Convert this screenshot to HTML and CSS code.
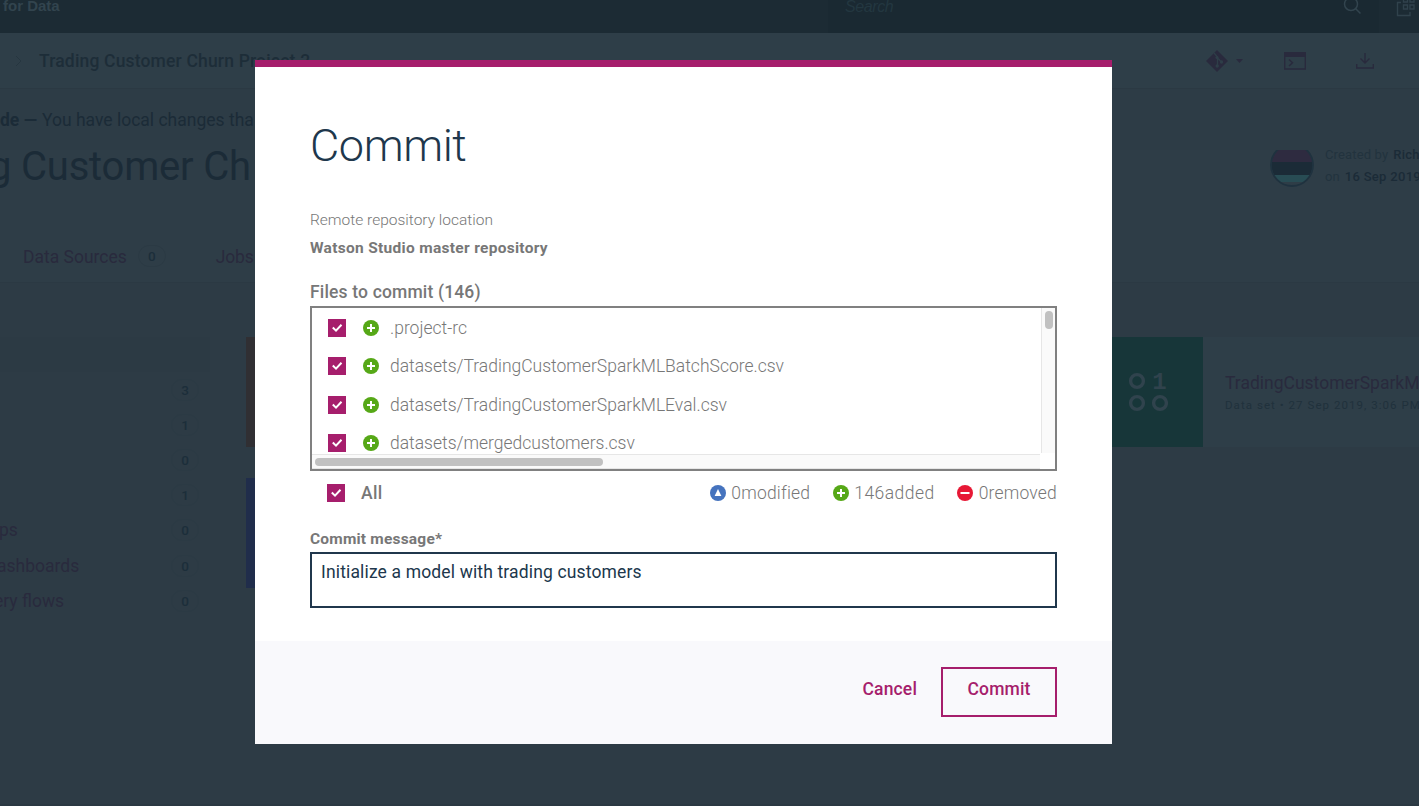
FILE: index.html
```html
<!DOCTYPE html>
<html lang="en">
<head>
<meta charset="utf-8">
<title>Commit</title>
<link rel="stylesheet" href="styles.css">
</head>
<body>
<svg class="defs" width="0" height="0">
  <symbol id="check" viewBox="0 0 18 18"><rect width="18" height="18" fill="#a61e6c"/><path d="M4.800 8.500l3.200 3.100 5.500-5.900" fill="none" stroke="#fff" stroke-width="2"/></symbol>
  <symbol id="add" viewBox="0 0 16 16"><circle cx="8" cy="8" r="8" fill="#56a817"/><path d="M8 4v8M4 8h8" stroke="#fff" stroke-width="2"/></symbol>
</svg>
<div class="page">
  <header class="topbar">
    <div class="brand"><span>for Data</span></div>
    <div class="search"><span>Search</span>
      <svg width="20" height="20" viewBox="0 0 20 20"><circle cx="9" cy="9" r="6.500"/><path d="M13.500 13.500l5 5"/></svg>
    </div>
    <svg class="apps" width="20" height="22" viewBox="0 0 20 22"><path d="M5 7.500H1.500v13H14V17M7.500 3h4v4h-4zM14 3h4v4h-4zM7.500 10h4v4h-4zM14 10h4v4h-4z"/></svg>
  </header>
  <nav class="crumbs">
    <svg class="chev" width="8" height="12" viewBox="0 0 8 12"><path d="M1 1l5 5-5 5"/></svg>
    <span class="crumb">Trading Customer Churn Project 2</span>
    <div class="tools">
      <svg width="22" height="22" viewBox="0 0 22 22"><path d="M11 0l11 11-11 11L0 11z" fill="#292a3d"/><path d="M8 3l3.500 4v9M11.500 8l4 4" stroke="#2e3e48" stroke-width="1.300" fill="none"/><circle cx="11" cy="7.500" r="1.500" fill="#2e3e48"/><circle cx="11.200" cy="16" r="1.700" fill="#2e3e48"/><circle cx="15.500" cy="12" r="1.700" fill="#2e3e48"/></svg>
      <svg class="caret" width="7" height="4" viewBox="0 0 7 4"><path d="M0 0h7L3.500 4z" fill="#292a3d"/></svg>
      <svg class="term" width="22" height="18" viewBox="0 0 22 18"><path d="M.700 1h20.600v16H.700z" fill="none" stroke="#292a3d" stroke-width="1.400"/><path d="M0 0h22v5H0z" fill="#292a3d"/><path d="M5 7.500l3.500 3.200L5 14" fill="none" stroke="#292a3d" stroke-width="1.500"/></svg>
      <svg width="18" height="16" viewBox="0 0 18 16"><path d="M9 0v9.500M4.500 5.500L9 10l4.500-4.500M.700 11v4h16.600v-4" fill="none" stroke="#292a3d" stroke-width="1.400"/></svg>
    </div>
  </nav>
  <div class="banner"><b>de —</b><span>You have local changes tha</span></div>
  <section class="hero">
    <h1><span>g Customer Ch</span></h1>
    <div class="owner">
      <svg class="avatar" width="44" height="38" viewBox="0 6 44 38"><clipPath id="disc"><circle cx="22" cy="21" r="20.500"/></clipPath><g clip-path="url(#disc)"><path d="M0 0h44v18H0z" fill="#2e2b40"/><path d="M0 18h44v13H0z" fill="#1b2b37"/><path d="M0 31h44v7H0z" fill="#284c54"/></g><circle cx="22" cy="21" r="21" fill="none" stroke="#1f323f" stroke-width="1.800"/></svg>
      <div class="meta"><div><span>Created by</span> <b>Rich</b></div><div><span>on</span> <b>16 Sep 2019</b></div></div>
    </div>
    <div class="tabs"><span class="link">Data Sources</span><i class="pill">0</i><span class="link jobs">Jobs</span></div>
  </section>
  <main class="content">
    <aside class="side">
      <div class="selected"></div>
      <div class="item"><span></span><i class="pill">3</i></div>
      <div class="item"><span></span><i class="pill">1</i></div>
      <div class="item"><span></span><i class="pill">0</i></div>
      <div class="item"><span></span><i class="pill">1</i></div>
      <div class="item"><span class="clip-s">ps</span><i class="pill">0</i></div>
      <div class="item"><span class="clip-m">ashboards</span><i class="pill">0</i></div>
      <div class="item"><span class="clip-l">ery flows</span><i class="pill">0</i></div>
    </aside>
    <div class="tiles"><div class="tile orange"></div><div class="tile blue"></div></div>
    <div class="asset">
      <div class="thumb"><svg width="40" height="40" viewBox="0 0 40 40"><g fill="none" stroke="#30434d" stroke-width="3.400"><circle cx="9" cy="9" r="6.400"/><circle cx="9" cy="31" r="6.400"/><circle cx="32" cy="31" r="6.400"/></g><text x="31.500" y="17" text-anchor="middle">1</text></svg></div>
      <div class="info"><div class="name">TradingCustomerSparkM</div><div class="kind">Data set • 27 Sep 2019, 3:06 PM</div></div>
    </div>
  </main>
</div>

<div class="modal" role="dialog">
  <div class="body">
    <h2>Commit</h2>
    <p class="small">Remote repository location</p>
    <p class="small bold">Watson Studio master repository</p>
    <p class="files">Files to commit (146)</p>
    <div class="list">
      <div class="rows">
        <div class="row"><svg class="box"><use href="#check"/></svg><svg class="dot"><use href="#add"/></svg><span>.project-rc</span></div>
        <div class="row"><svg class="box"><use href="#check"/></svg><svg class="dot"><use href="#add"/></svg><span>datasets/TradingCustomerSparkMLBatchScore.csv</span></div>
        <div class="row"><svg class="box"><use href="#check"/></svg><svg class="dot"><use href="#add"/></svg><span>datasets/TradingCustomerSparkMLEval.csv</span></div>
        <div class="row"><svg class="box"><use href="#check"/></svg><svg class="dot"><use href="#add"/></svg><span>datasets/mergedcustomers.csv</span></div>
      </div>
      <div class="vbar"><div></div></div>
      <div class="hbar"><div></div></div>
      <div class="corner"></div>
    </div>
    <div class="summary">
      <svg class="box"><use href="#check"/></svg><span class="all">All</span>
      <div class="stat"><svg class="dot" viewBox="0 0 16 16"><circle cx="8" cy="8" r="8" fill="#4573be"/><path d="M8 4l3.400 7H4.600z" fill="#fff"/></svg><span>0modified</span></div>
      <div class="stat wide"><svg class="dot"><use href="#add"/></svg><span>146added</span></div>
      <div class="stat"><svg class="dot" viewBox="0 0 16 16"><circle cx="8" cy="8" r="8" fill="#e71835"/><path d="M3.500 8h9" stroke="#fff" stroke-width="2"/></svg><span>0removed</span></div>
    </div>
    <p class="small bold msg">Commit message*</p>
    <div class="input">Initialize a model with trading customers</div>
  </div>
  <footer><span class="cancel">Cancel</span><span class="commit">Commit</span></footer>
</div>
</body>
</html>
```

FILE: styles.css
```css
* { box-sizing: border-box; }
body { margin: 0; width: 1419px; height: 806px; overflow: hidden; background: #2d3b45; font: 17.5px Roboto, sans-serif; color: #1b2b37; position: relative; }
h1, h2, p { margin: 0; font-weight: 400; }
span, b, .name, .kind { white-space: nowrap; }
.defs { display: block; position: absolute; }
.page { width: 1419px; height: 806px; overflow: hidden; display: flex; flex-direction: column; border-bottom: 2px solid #2a3842; }
.topbar { height: 33px; flex: none; background: #1c2b34; display: flex; }
.brand { width: 828px; padding-left: 3px; font: bold 15px/19px "Liberation Sans", sans-serif; color: #32444e; margin-top: -4px; }
.search { width: 551px; background: #1a2932; display: flex; justify-content: space-between; padding: 0 17px; font: italic 16px/19px "Liberation Sans", sans-serif; letter-spacing: -.4px; color: #233740; }
.search span { margin-top: -3px; }
.search svg { margin-top: -5px; fill: none; stroke: #32444e; stroke-width: 1.5; }
.apps { margin: -5px 0 0 17px; fill: none; stroke: #30424c; stroke-width: 1.4; }
.crumbs { height: 56px; flex: none; background: #2e3e48; border-bottom: 1px solid #2b3943; display: flex; align-items: center; padding-left: 15px; }
.chev { fill: none; stroke: #263640; margin-right: 16px; }
.crumb { font-weight: 500; color: #1d2d38; width: 271px; letter-spacing: .17px; }
.tools { display: flex; align-items: center; margin-left: auto; padding-right: 45px; }
.caret { margin: 0 41px 0 8px; }
.term { margin-right: 50px; }
.banner { height: 61px; flex: none; line-height: 62px; display: flex; gap: 5px; background: #2d3c46; }
.banner b { width: 37px; }
.hero { height: 133px; flex: none; background: #2e3d47; border-bottom: 1px solid #2b3943; display: grid; grid-template-columns: 1270px 149px; grid-template-rows: 82px 50px; }
h1 { font-size: 40px; line-height: 34px; margin-left: -11px; letter-spacing: -.2px; }
.owner { display: flex; gap: 11px; }
.avatar { flex: none; }
.meta { font-size: 13px; line-height: 22px; color: #22333e; margin-top: -6px; letter-spacing: .15px; }
.meta div { white-space: nowrap; }
.meta b { font-weight: 500; color: #1b2b37; margin-left: 1.5px; letter-spacing: .3px; }
.tabs { display: flex; height: 50px; padding-left: 23px; line-height: 50px; }
.link, .item { color: #292a3d; }
.pill { font: 500 13.5px/20px Roboto, sans-serif; width: 28px; height: 22px; border: 1px solid #2b3a44; border-radius: 11px; text-align: center; color: #1c2e3a; flex: none; }
.tabs .pill { margin: 13px 50px 0 11px; }
.jobs { letter-spacing: -.2px; }
.content { display: grid; grid-template-columns: 246px 866px 307px; padding-top: 54px; }
.selected { width: 210px; height: 35px; background: #2c3a44; }
.item { width: 199px; height: 35.2px; display: flex; justify-content: space-between; align-items: center; }
.clip-s { margin-left: -1px; }
.clip-m { margin-left: -3px; }
.clip-l { margin-left: -6px; }
.tile { width: 20px; height: 110px; margin-bottom: 31px; }
.orange { background: #302f33; }
.blue { background: #202d4b; }
.asset { display: flex; height: 110px; background: #2e3e48; }
.thumb { width: 91px; background: #173639; flex: none; padding: 35px 0 0 16px; }
.thumb text { font: bold 24px "Liberation Mono", monospace; fill: #30434d; }
.info { padding: 34px 0 0 22px; }
.name { line-height: 24px; color: #292a3d; }
.kind { font-size: 11.5px; line-height: 20px; color: #20313c; letter-spacing: 1.05px; }
.modal { position: absolute; left: 255px; top: 60px; width: 857px; height: 684px; background: #fff; border-top: 7px solid #a61e6c; display: flex; flex-direction: column; color: #777; }
.body { flex: 1; padding: 49px 55px 0; }
h2 { font-size: 45px; line-height: 60px; font-weight: 300; color: #20374c; margin-bottom: 30px; letter-spacing: -.4px; }
.small { font-size: 15.5px; line-height: 28px; font-weight: 300; }
.bold { font-weight: 700; letter-spacing: .3px; }
.files { font-weight: 500; line-height: 24px; margin-top: 18px; letter-spacing: .16px; }
.list { position: relative; height: 165px; margin-top: 2px; border: 2px solid #808080; overflow: hidden; }
.rows { padding-top: .4px; }
.row { height: 38.5px; display: flex; align-items: center; padding-left: 16px; font-weight: 300; }
.box { width: 18px; height: 18px; flex: none; }
.dot { width: 16px; height: 16px; flex: none; }
.row .dot { margin: 0 11px 0 17px; }
.vbar { position: absolute; right: -1px; top: 0; width: 15px; height: 145px; background: #fafafa; border-left: 1px solid #e6e6e6; padding: 3px 0 0 3px; }
.vbar div { width: 8px; height: 18px; border-radius: 4px; background: #c1c1c1; }
.hbar { position: absolute; left: 0; bottom: 0; width: 728px; height: 15px; background: #fafafa; border: solid #e6e6e6; border-width: 1px 0; padding: 3px; }
.hbar div { width: 288px; height: 8px; border-radius: 4px; background: #c1c1c1; }
.corner { position: absolute; right: 0; bottom: 0; width: 15px; height: 16px; background: #fff; }
.summary { display: flex; align-items: center; height: 24px; margin-top: 10px; padding-left: 17px; font-weight: 300; }
.all { font-weight: 500; margin: 0 auto 0 16px; letter-spacing: .4px; }
.stat { display: flex; align-items: center; margin-left: 22.5px; letter-spacing: .2px; }
.stat.wide { letter-spacing: .45px; }
.stat .dot { margin-right: 5.5px; }
.msg { line-height: 24px; margin-top: 22px; letter-spacing: .2px; }
.input { height: 56px; margin-top: 1px; border: 2px solid #20374c; color: #20374c; line-height: 36px; padding-left: 9px; letter-spacing: .15px; }
footer { height: 103px; background: #f9f9fc; display: flex; justify-content: flex-end; padding: 26px 55px 0 0; color: #a61e6c; font-weight: 500; letter-spacing: .15px; }
.cancel { line-height: 44px; margin-right: 24px; }
.commit { width: 116px; height: 50px; border: 2px solid; line-height: 40px; text-align: center; }
```
